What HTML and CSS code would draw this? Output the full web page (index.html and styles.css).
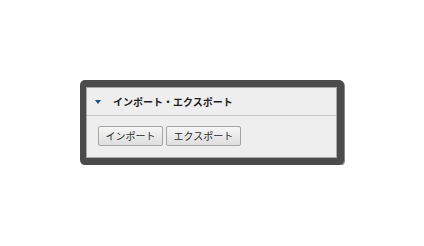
FILE: index.html
```html
<!DOCTYPE html>
<html lang="ja">
<head>
<meta charset="utf-8">
<title>インポート・エクスポート</title>
<link rel="stylesheet" href="styles.css">
</head>
<body>
<div class="frame">
  <div class="panel">
    <div class="panel-header">
      <span class="caret"></span>
      <span class="title">インポート・エクスポート</span>
    </div>
    <div class="panel-body">
      <button class="btn" type="button">インポート</button>
      <button class="btn" type="button">エクスポート</button>
    </div>
  </div>
</div>
</body>
</html>
```

FILE: styles.css
```css
html, body {
  margin: 0;
  padding: 0;
  background: #ffffff;
}
body {
  padding: 80px 0 0 80px;
  font-family: "Noto Sans CJK JP", "Noto Sans", sans-serif;
}
.frame {
  width: 264px;
  box-sizing: border-box;
  background: #4b4b4b;
  border-radius: 5px;
  padding: 7px 7px 7px 6px;
  box-shadow: 1px 1px 0 #8a8a8a;
}
.panel {
  background: #eeeeee;
  border: 1px solid #a9a9a9;
  height: 71px;
  box-sizing: border-box;
}
.panel-header {
  display: flex;
  align-items: center;
  height: 28px;
  box-sizing: border-box;
  border-bottom: 1px solid #c6c6c6;
  padding-left: 8px;
}
.caret {
  width: 0;
  height: 0;
  border-left: 3px solid transparent;
  border-right: 3px solid transparent;
  border-top: 4px solid #1b4f86;
  margin-top: 1px;
}
.title {
  margin-left: 12px;
  font-size: 10px;
  font-weight: bold;
  color: #1e1e1e;
  line-height: 12px;
}
.panel-body {
  display: flex;
  gap: 3px;
  padding: 10px 0 0 11px;
}
.btn {
  font-family: "Noto Sans CJK JP", "Noto Sans", sans-serif;
  font-size: 10px;
  line-height: 12px;
  color: #2a2a2a;
  padding: 3px 6.5px;
  margin: 0;
  height: 20px;
  box-sizing: border-box;
  border: 1px solid #a6a6a6;
  border-radius: 2px;
  background: linear-gradient(#f6f6f6, #dedede);
}
```
